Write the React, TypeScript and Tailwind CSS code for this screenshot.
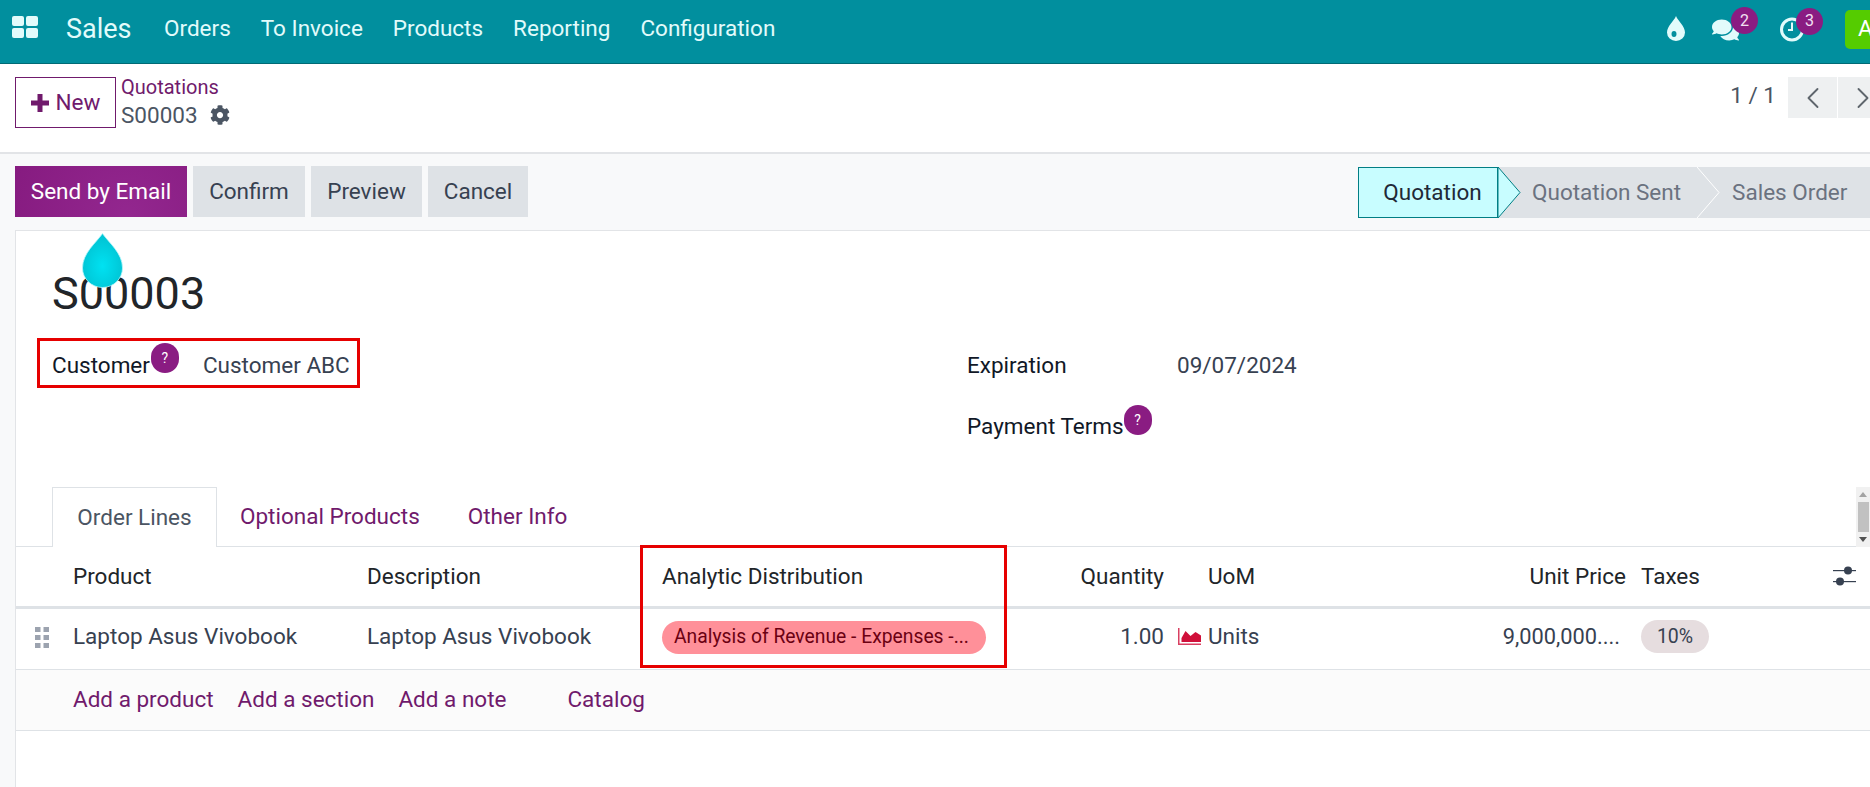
import React from "react";
import { ChevronLeft, ChevronRight } from "lucide-react";
import { FaCog, FaComments } from "react-icons/fa";

const font = { fontFamily: '"Roboto", "Liberation Sans", sans-serif' };

const navItems = ["Orders", "To Invoice", "Products", "Reporting", "Configuration"];

const Badge = ({ n, className }: { n: number; className: string }) => (
  <span className={`absolute flex h-[27px] w-[27px] items-center justify-center rounded-full bg-[#8a1c82] text-[16px] text-[#f3e0f2] ${className}`}>
    {n}
  </span>
);

const Help = () => (
  <span className="flex h-[30px] w-[28px] items-center justify-center rounded-full bg-[#8a1c82] text-[14px] text-white">?</span>
);

const GrayButton = ({ label, width }: { label: string; width: string }) => (
  <button className={`flex h-[51px] items-center justify-center bg-[#dee2e6] text-[22.5px] text-[#374151] ${width}`}>{label}</button>
);

const tableCols = "grid grid-cols-[45px_294px_295px_390px_136px_209px_244px_191px_50px] items-center";

export default function App() {
  return (
    <div style={font} className="relative h-[787px] w-[1870px] overflow-hidden bg-[#f8f9fa] text-[22.5px]">
      {/* navbar */}
      <header className="flex h-[64px] items-center border-b border-[#016a75] bg-[#018f9e] text-[#e2fbfb]">
        <svg viewBox="0 0 26 22" className="-mt-[10px] ml-[12px] h-[22px] w-[26px]" fill="currentColor">
          <rect x="0" y="0" width="12" height="10" rx="2" />
          <rect x="14" y="0" width="12" height="10" rx="2" />
          <rect x="0" y="12" width="12" height="10" rx="2" />
          <rect x="14" y="12" width="12" height="10" rx="2" />
        </svg>
        <span className="-mt-[5px] ml-[28px] w-[98px] text-[27px]">Sales</span>
        <nav className="-mt-[5px] flex gap-[30px]">
          {navItems.map((item) => (
            <a key={item}>{item}</a>
          ))}
        </nav>
        <div className="-mr-[15px] -mt-[5px] ml-auto flex items-center">
          <svg viewBox="0 0 18 25" className="-mt-[2px] h-[25px] w-[18px]">
            <path
              fillRule="evenodd"
              fill="currentColor"
              d="M9 0C11 5 18 10 18 16.500A9 8.500 0 0 1 0 16.500C0 10 7 5 9 0ZM7 15A2.500 3 0 0 0 7 21A2.500 3 0 0 0 7 15Z"
            />
          </svg>
          <span className="relative ml-[26px] mt-[2px] h-[24px] w-[29px]">
            <FaComments className="h-[24px] w-[29px]" />
            <Badge n={2} className="-top-[11px] left-[20px]" />
          </span>
          <span className="relative ml-[40px] h-[25px] w-[24px]">
            <svg viewBox="0 0 24 24" className="h-[25px] w-[24px]" fill="none" stroke="currentColor" strokeWidth="3">
              <circle cx="12" cy="12" r="10.500" />
              <path d="M12 5V12.500H8" strokeWidth="2" />
            </svg>
            <Badge n={3} className="-top-[9px] left-[16px]" />
          </span>
          <span className="ml-[41px] flex h-[39px] w-[40px] items-center rounded-[5px] bg-[#55cc00] pl-[13px] text-white">A</span>
        </div>
      </header>

      {/* control panel */}
      <div className="flex h-[90px] items-start border-b-2 border-[#e2e4e7] bg-white pl-[15px] pt-[13px]">
        <button className="flex h-[51px] w-[101px] items-center justify-center gap-[7px] border border-[#701a6c] text-[#701a6c]">
          <svg viewBox="0 0 18 18" className="h-[18px] w-[18px]" fill="currentColor">
            <path d="M6.500 0H11.500V6.500H18V11.500H11.500V18H6.500V11.500H0V6.500H6.500Z" />
          </svg>
          New
        </button>
        <div className="-mt-[4px] ml-[5px] leading-[28px]">
          <a className="block text-[20px] text-[#701a6c]">Quotations</a>
          <div className="flex items-center gap-[12px] text-[#4b5563]">
            S00003 <FaCog className="h-[20px] w-[20px]" />
          </div>
        </div>
        <div className="-mr-[17px] ml-auto flex items-start">
          <span className="mr-[12px] mt-[2px] text-[#4b5563]">1 / 1</span>
          <button className="flex h-[41px] w-[49px] items-center justify-center bg-[#eef0f1] text-[#5f666d]">
            <ChevronLeft className="h-[36px] w-[36px]" strokeWidth={1.250} />
          </button>
          <button className="ml-px flex h-[41px] w-[49px] items-center justify-center bg-[#eef0f1] text-[#5f666d]">
            <ChevronRight className="h-[36px] w-[36px]" strokeWidth={1.250} />
          </button>
        </div>
      </div>

      {/* action bar */}
      <div className="flex h-[76px] items-start pl-[15px] pt-[12px]">
        <div className="flex gap-[6px]">
          <button className="h-[51px] w-[172px] bg-[radial-gradient(circle_at_65%_100%,#93278f,#861b80)] text-white">Send by Email</button>
          <GrayButton label="Confirm" width="w-[112px]" />
          <GrayButton label="Preview" width="w-[111px]" />
          <GrayButton label="Cancel" width="w-[100px]" />
        </div>
        <div className="relative ml-auto mt-px flex h-[51px] w-[512px] bg-[#dee2e6] text-[#6b7280]">
          <div className="flex h-[51px] w-[140px] items-center justify-center border border-[#017e84] bg-[#c8fdff] pl-[9px] text-[#1f2937]">Quotation</div>
          <svg viewBox="0 0 24 51" className="h-[51px] w-[24px]">
            <path d="M0 0L22 25.500L0 51Z" fill="#c8fdff" stroke="#017e84" />
          </svg>
          <span className="ml-[10px] self-center">Quotation Sent</span>
          <svg viewBox="0 0 24 51" className="ml-[16px] h-[51px] w-[24px]">
            <path d="M0 0L22 25.500L0 51" fill="none" stroke="#ffffff" />
          </svg>
          <span className="ml-[11px] self-center">Sales Order</span>
        </div>
      </div>

      {/* form sheet */}
      <main className="relative ml-[15px] h-[557px] border-l border-t border-[#e2e4e7] bg-white text-[#374151]">
        <WaterDrop />
        <h1 className="ml-[36px] mt-[33px] text-[45px] leading-[60px] text-[#212529]">S00003</h1>

        <div className="ml-[36px] mt-[25px] flex items-start">
          <div className="flex h-[130px] w-[915px] items-start">
            <span className="text-[#111827]">Customer</span>
            <span className="-mt-[6px] ml-px"><Help /></span>
            <span className="ml-[24px]">Customer ABC</span>
          </div>
          <div>
            <div className="flex h-[61px] items-start">
              <span className="w-[210px] text-[#111827]">Expiration</span>
              <span>09/07/2024</span>
            </div>
            <div className="flex items-start">
              <span className="text-[#111827]">Payment Terms</span>
              <span className="-mt-[5px]"><Help /></span>
            </div>
          </div>
        </div>

        {/* tabs */}
        <div className="relative mt-[8px] flex h-[60px] items-center border-b border-[#dee2e6] pl-[36px] text-[#701a6c]">
          <a className="-mb-px flex h-[60px] w-[165px] items-center justify-center border border-b-0 border-[#dee2e6] bg-white text-[#4b5563]">Order Lines</a>
          <a className="ml-[23px]">Optional Products</a>
          <a className="ml-[48px]">Other Info</a>
          <div className="absolute right-0 top-0 flex h-[60px] w-[14px] flex-col items-center justify-between bg-[#f1f1f1] py-[5px]">
            <span className="h-0 w-0 border-x-[4px] border-b-[5px] border-x-transparent border-b-[#a3a3a3]" />
            <span className="h-[30px] w-[11px] bg-[#c1c1c1]" />
            <span className="h-0 w-0 border-x-[4px] border-t-[5px] border-x-transparent border-t-[#525252]" />
          </div>
        </div>

        {/* order lines */}
        <div className={`${tableCols} h-[62px] border-b-[3px] border-[#dee2e6] text-[#212529]`}>
          <span />
          <span className="pl-[12px]">Product</span>
          <span className="pl-[12px]">Description</span>
          <span className="pl-[12px]">Analytic Distribution</span>
          <span className="pr-[12px] text-right">Quantity</span>
          <span className="pl-[32px]">UoM</span>
          <span className="pr-[3px] text-right">Unit Price</span>
          <span className="pl-[12px]">Taxes</span>
          <svg viewBox="0 0 23 20" className="-mt-[2px] ml-[13px] h-[20px] w-[23px]" fill="#374151">
            <rect x="0" y="4" width="23" height="1.200" />
            <circle cx="15" cy="4.500" r="4" />
            <rect x="0" y="15" width="23" height="1.200" />
            <circle cx="7" cy="15.500" r="4" />
          </svg>
        </div>
        <div className={`${tableCols} h-[61px] border-b border-[#dee2e6] pb-[4px]`}>
          <svg viewBox="0 0 14 21" className="ml-[19px] h-[21px] w-[14px]" fill="#9ca3af">
            <rect x="0" y="0" width="5.500" height="5" />
            <rect x="8.500" y="0" width="5.500" height="5" />
            <rect x="0" y="8" width="5.500" height="5" />
            <rect x="8.500" y="8" width="5.500" height="5" />
            <rect x="0" y="16" width="5.500" height="5" />
            <rect x="8.500" y="16" width="5.500" height="5" />
          </svg>
          <span className="pl-[12px]">Laptop Asus Vivobook</span>
          <span className="pl-[12px]">Laptop Asus Vivobook</span>
          <div className="pl-[12px]">
            <span className="flex h-[33px] w-[324px] items-center rounded-full bg-[#ff9099] pl-[12px] text-[19.3px] text-[#6b0012]">
              Analysis of Revenue - Expenses -...
            </span>
          </div>
          <span className="pr-[12px] text-right">1.00</span>
          <span className="flex items-center gap-[7px] pl-[2px]">
            <svg viewBox="0 0 23 18" className="h-[18px] w-[23px]" fill="#d0103a">
              <path d="M0 0H1.500V15.500H23V17H0Z" opacity="0.8" />
              <path d="M3.500 14V10L7.500 3L12.500 8L17.500 4L23 7.500V14Z" />
            </svg>
            Units
          </span>
          <span className="pr-[9px] text-right text-[21.8px]">9,000,000....</span>
          <div className="-mt-[2px] pl-[12px]">
            <span className="flex h-[33px] w-[68px] items-center justify-center rounded-full bg-[#e6dddf] pt-[2px] text-[19.5px]">10%</span>
          </div>
          <span />
        </div>
        <div className="flex h-[61px] items-center border-b border-[#dee2e6] bg-[#fbfbfb] pl-[57px] text-[#701a6c]">
          <a>Add a product</a>
          <a className="ml-[24px]">Add a section</a>
          <a className="ml-[24px]">Add a note</a>
          <a className="ml-[61px]">Catalog</a>
        </div>

        {/* red annotation boxes */}
        <div className="pointer-events-none absolute left-[21px] top-[107px] h-[50px] w-[323px] border-[3px] border-[#e60000]" />
        <div className="pointer-events-none absolute left-[624px] top-[314px] h-[123px] w-[367px] border-[3px] border-[#e60000]" />
      </main>
    </div>
  );
}

function WaterDrop() {
  return (
    <svg viewBox="0 0 41 55" className="absolute left-[66px] top-[2px] h-[55px] w-[41px]">
      <defs>
        <radialGradient id="drop" cx="50%" cy="60%" r="50%">
          <stop offset="0%" stopColor="#00e2f2" />
          <stop offset="100%" stopColor="#00c6d6" />
        </radialGradient>
      </defs>
      <path d="M20.500 0.500C27 10 40.500 20 40.500 35A20 19.500 0 0 1 0.500 35C0.500 20 14 10 20.500 0.500Z" fill="url(#drop)" stroke="#b8f6fb" strokeWidth="0.800" />
    </svg>
  );
}
